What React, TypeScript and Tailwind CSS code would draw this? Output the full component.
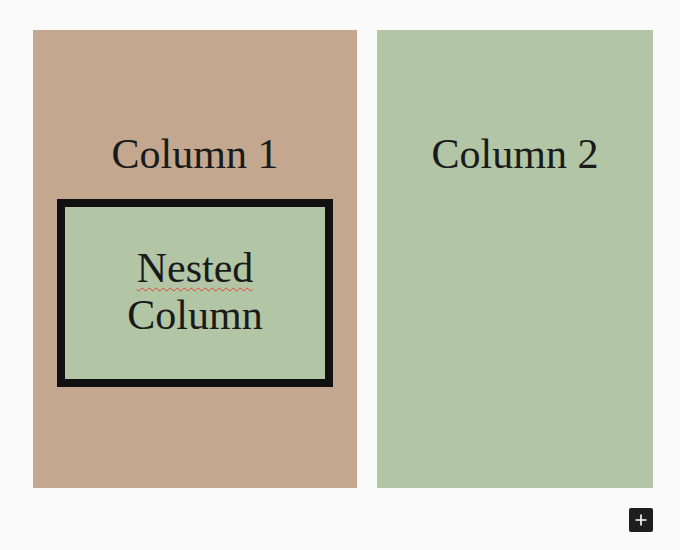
export default function App() {
  return (
    <div
      className="min-h-[550px] w-[680px] bg-[#fafafa] pl-[33px] pr-[27px] pt-[30px]"
      style={{ fontFamily: '"Liberation Serif", serif' }}
    >
      <div className="flex h-[458px] gap-[20px]">
        <div className="flex w-[324px] flex-col items-center bg-[#c3a88f] px-[24px] pt-[100px]">
          <h2 className="text-[42px] leading-[48px] font-normal text-[#1a1a1a]">Column 1</h2>
          <div className="mt-[21px] flex h-[188px] w-full flex-col items-center justify-center border-[8px] border-[#111111] bg-[#b2c5a5] pb-[2px] text-center text-[42px] leading-[47px] text-[#1a1a1a]">
            <span className="underline decoration-wavy decoration-[#e0443c] decoration-1 underline-offset-[5px]">Nested</span>
            <span>Column</span>
          </div>
        </div>
        <div className="flex w-[276px] flex-col items-center bg-[#b2c5a5] pt-[100px]">
          <h2 className="text-[42px] leading-[48px] font-normal text-[#1a1a1a]">Column 2</h2>
        </div>
      </div>
      <div className="mt-[20px] flex justify-end">
        <button className="flex h-[24px] w-[24px] items-center justify-center rounded-[2px] bg-[#1e1e1e] text-white">
          <svg width="14" height="14" viewBox="0 0 14 14" fill="none" stroke="currentColor" strokeWidth="1.6">
            <path d="M7 1.5v11M1.5 7h11" />
          </svg>
        </button>
      </div>
    </div>
  )
}
